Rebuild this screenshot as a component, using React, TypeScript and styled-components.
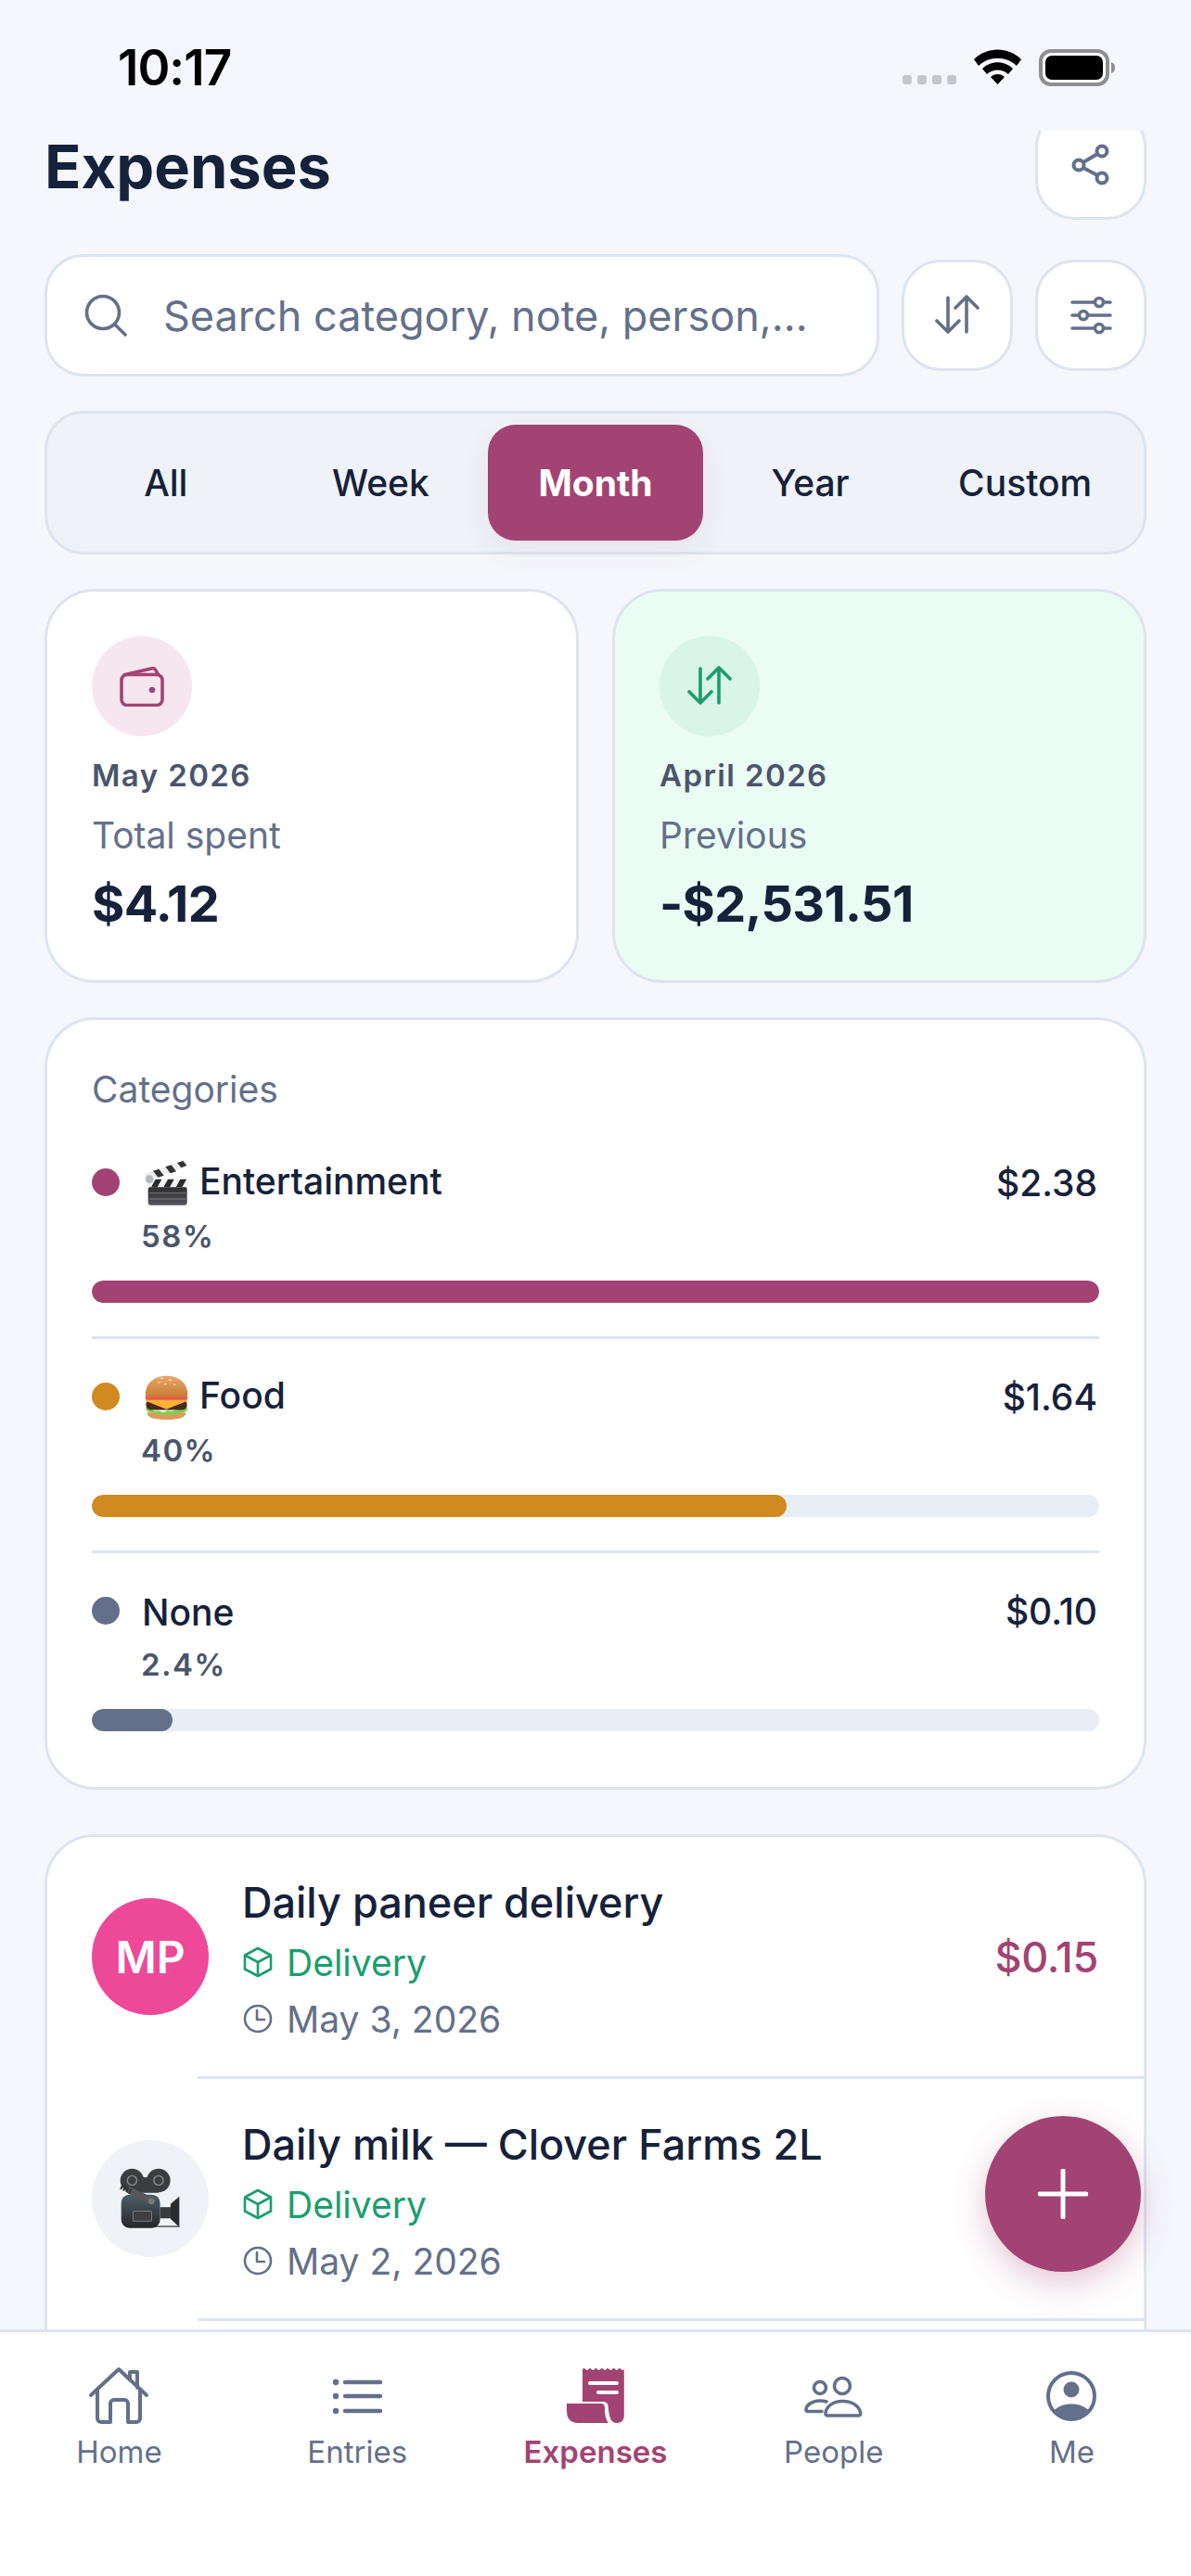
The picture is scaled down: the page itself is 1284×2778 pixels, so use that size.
import React from 'react';
import styled, { createGlobalStyle } from 'styled-components';

const ACCENT = '#a34373';
const INK = '#16213a';
const MUTED = '#64708a';
const LINE = '#dde4f0';
const GREEN = '#1a9e6f';

const GlobalStyle = createGlobalStyle`
  html, body {
    margin: 0;
    padding: 0;
    background: #f5f7fc;
  }
  * {
    box-sizing: border-box;
  }
`;

const Phone = styled.div`
  width: 1284px;
  height: 2778px;
  position: relative;
  display: flex;
  flex-direction: column;
  overflow: hidden;
  background: #f5f7fc;
  color: ${INK};
  font-family: Inter, 'Liberation Sans', sans-serif;
`;

const StatusBar = styled.div`
  height: 141px;
  flex: none;
  display: flex;
  align-items: flex-start;
  justify-content: space-between;
  padding: 45px 82px 0 127px;
`;

const Clock = styled.div`
  font-size: 53px;
  line-height: 56px;
  font-weight: 600;
  letter-spacing: -1px;
  color: #000;
`;

const StatusIcons = styled.div`
  display: flex;
  align-items: flex-start;
  padding-top: 8px;
`;

const Scroller = styled.div`
  flex: 1;
  min-height: 0;
  overflow: hidden;
`;

const Content = styled.div`
  margin-top: -24px;
  padding: 0 48px;
  display: flex;
  flex-direction: column;
`;

const TitleRow = styled.div`
  display: flex;
  align-items: center;
  justify-content: space-between;
  height: 120px;
`;

const Title = styled.h1`
  margin: 6px 0 0;
  font-size: 65px;
  line-height: 72px;
  font-weight: 700;
  color: ${INK};
`;

const IconButton = styled.button`
  width: 120px;
  height: 120px;
  flex: none;
  padding: 0;
  display: flex;
  align-items: center;
  justify-content: center;
  background: #fff;
  border: 3px solid ${LINE};
  border-radius: 42px;
`;

const SearchRow = styled.div`
  margin-top: 37px;
  display: flex;
  align-items: center;
  gap: 24px;
`;

const SearchBox = styled.div`
  flex: 1;
  height: 132px;
  display: flex;
  align-items: center;
  gap: 39px;
  padding: 0 40px;
  background: #fff;
  border: 3px solid ${LINE};
  border-radius: 42px;
`;

const Placeholder = styled.span`
  font-size: 45px;
  color: ${MUTED};
  white-space: nowrap;
`;

const Segments = styled.div`
  margin-top: 37px;
  height: 155px;
  display: flex;
  padding: 12px;
  background: #eff2f8;
  border: 3px solid ${LINE};
  border-radius: 42px;
`;

const Segment = styled.div<{ $active?: boolean }>`
  flex: 1;
  display: flex;
  align-items: center;
  justify-content: center;
  border-radius: 30px;
  font-size: 39px;
  font-weight: ${(p) => (p.$active ? 700 : 500)};
  color: ${(p) => (p.$active ? '#fff' : INK)};
  background: ${(p) => (p.$active ? ACCENT : 'transparent')};
  box-shadow: ${(p) => (p.$active ? '0 12px 30px rgba(163, 67, 115, 0.08)' : 'none')};
`;

const SummaryGrid = styled.div`
  margin-top: 37px;
  display: grid;
  grid-template-columns: 1fr 1fr;
  gap: 36px;
`;

const SummaryCard = styled.div<{ $tint?: string }>`
  height: 425px;
  padding: 48px;
  background: ${(p) => p.$tint || '#fff'};
  border: 3px solid ${LINE};
  border-radius: 54px;
`;

const RoundIcon = styled.div<{ $bg: string }>`
  width: 108px;
  height: 108px;
  border-radius: 50%;
  display: flex;
  align-items: center;
  justify-content: center;
  background: ${(p) => p.$bg};
`;

const Period = styled.div`
  margin-top: 18px;
  font-size: 33px;
  line-height: 48px;
  font-weight: 600;
  letter-spacing: 1.4px;
  color: #4a556c;
`;

const SummaryLabel = styled.div`
  margin-top: 14px;
  font-size: 39px;
  line-height: 54px;
  color: ${MUTED};
`;

const SummaryValue = styled.div`
  margin-top: 11px;
  font-size: 54px;
  line-height: 72px;
  font-weight: 700;
  letter-spacing: -0.7px;
  color: ${INK};
`;

const CategoriesCard = styled.div`
  margin-top: 37px;
  padding: 48px 48px 24px;
  background: #fff;
  border: 3px solid ${LINE};
  border-radius: 54px;
`;

const CardHeading = styled.div`
  font-size: 39px;
  line-height: 54px;
  margin-bottom: 11px;
  color: ${MUTED};
`;

const CategoryRow = styled.div`
  padding: 36px 0;
  & + & {
    border-top: 3px solid ${LINE};
  }
`;

const CategoryHead = styled.div`
  height: 52px;
  display: flex;
  align-items: center;
`;

const Dot = styled.span<{ $color: string }>`
  width: 30px;
  height: 30px;
  flex: none;
  border-radius: 50%;
  margin-right: 24px;
  background: ${(p) => p.$color};
`;

const EmojiSlot = styled.span`
  width: 52px;
  display: flex;
  justify-content: center;
  margin-right: 10px;
`;

const CategoryName = styled.span<{ $raised?: boolean }>`
  flex: 1;
  margin-top: ${(p) => (p.$raised ? '-4px' : '2px')};
  font-size: 39px;
  font-weight: 500;
  color: ${INK};
`;

const CategoryAmount = styled.span`
  margin-right: 2px;
  font-size: 39px;
  font-weight: 500;
  color: ${INK};
`;

const Percent = styled.div`
  margin: 11px 0 27px 53px;
  font-size: 33px;
  line-height: 42px;
  font-weight: 600;
  letter-spacing: 1.4px;
  color: #4a556c;
`;

const Track = styled.div`
  height: 24px;
  border-radius: 12px;
  overflow: hidden;
  background: #e8eef6;
`;

const Fill = styled.div<{ $color: string }>`
  height: 100%;
  border-radius: 12px;
  background: ${(p) => p.$color};
`;

const ListCard = styled.div`
  margin-top: 48px;
  padding-bottom: 60px;
  background: #fff;
  border: 3px solid ${LINE};
  border-radius: 54px;
`;

const EntryRow = styled.div`
  height: 258px;
  display: flex;
  align-items: center;
  padding: 0 49px 0 48px;
`;

const Avatar = styled.div<{ $bg: string }>`
  width: 126px;
  height: 126px;
  flex: none;
  border-radius: 50%;
  display: flex;
  align-items: center;
  justify-content: center;
  margin-right: 36px;
  background: ${(p) => p.$bg};
  color: #fff;
  font-size: 48px;
  font-weight: 600;
`;

const EntryText = styled.div`
  flex: 1;
  min-width: 0;
  margin-top: 6px;
`;

const EntryTitle = styled.div`
  font-size: 45px;
  line-height: 60px;
  font-weight: 500;
  color: ${INK};
`;

const MetaLine = styled.div<{ $color: string }>`
  height: 54px;
  margin-top: 7px;
  display: flex;
  align-items: center;
  gap: 15px;
  padding-left: 1px;
  font-size: 39px;
  color: ${(p) => p.$color};
`;

const EntryAmount = styled.div`
  font-size: 45px;
  font-weight: 500;
  letter-spacing: -0.3px;
  color: ${ACCENT};
`;

const EntryDivider = styled.div`
  height: 3px;
  margin-left: 162px;
  background: ${LINE};
`;

const Fab = styled.button`
  position: absolute;
  left: 1062px;
  top: 2282px;
  width: 168px;
  height: 168px;
  padding: 0;
  border: none;
  border-radius: 50%;
  display: flex;
  align-items: center;
  justify-content: center;
  background: ${ACCENT};
  box-shadow: 0 12px 36px rgba(163, 67, 115, 0.3);
`;

const BottomNav = styled.nav`
  height: 266px;
  flex: none;
  position: relative;
  display: grid;
  grid-template-columns: repeat(5, 1fr);
  padding-top: 35px;
  align-items: start;
  background: #fff;
  border-top: 3px solid ${LINE};
`;

const Tab = styled.div<{ $active?: boolean }>`
  display: flex;
  flex-direction: column;
  align-items: center;
  gap: 7px;
  font-size: 33px;
  line-height: 42px;
  font-weight: ${(p) => (p.$active ? 600 : 400)};
  color: ${(p) => (p.$active ? ACCENT : MUTED)};
`;

const SortIcon = ({ color = MUTED, size = 48 }: { color?: string; size?: number }) => (
  <svg width={size} height={size} viewBox="0 0 48 48" fill="none" stroke={color} strokeWidth="3.6" strokeLinecap="round" strokeLinejoin="round">
    <path d="M14 5v37M2 30l12 12 12-12" />
    <path d="M34 42V4M22 16L34 4l12 12" />
  </svg>
);

const ShareIcon = () => (
  <svg width="42" height="45" viewBox="0 0 42 45" fill="none" stroke={MUTED} strokeWidth="4">
    <circle cx="8" cy="23" r="5.5" />
    <circle cx="33" cy="8" r="5.5" />
    <circle cx="33" cy="37" r="5.5" />
    <path d="M13 20L28 11M13 26L28 34" />
  </svg>
);

const FilterIcon = () => (
  <svg width="45" height="42" viewBox="0 0 45 42" fill="none" stroke={MUTED} strokeWidth="3.6" strokeLinecap="round">
    <path d="M2 7h24M36 7h7M2 21h7M19 21h24M2 35h24M36 35h7" />
    <circle cx="31" cy="7" r="4.5" />
    <circle cx="14" cy="21" r="4.5" />
    <circle cx="31" cy="35" r="4.5" />
  </svg>
);

const SearchIcon = () => (
  <svg width="46" height="46" viewBox="0 0 46 46" fill="none" stroke={MUTED} strokeWidth="3.6" strokeLinecap="round">
    <circle cx="20" cy="20" r="17.5" />
    <path d="M33 33l11 11" />
  </svg>
);

const WalletIcon = () => (
  <svg width="48" height="44" viewBox="0 0 48 44" fill="none" stroke={ACCENT} strokeWidth="3.6" strokeLinejoin="round">
    <rect x="2" y="9.500" width="44" height="33" rx="6" />
    <path d="M4 10l30-7a4 4 0 0 1 5 2l2.500 4.500" />
    <circle cx="35" cy="26" r="3.200" fill={ACCENT} stroke="none" />
  </svg>
);

const BoxIcon = () => (
  <svg width="32" height="34" viewBox="0 0 32 34" fill="none" stroke={GREEN} strokeWidth="2.6" strokeLinejoin="round">
    <path d="M16 2l14 7.5v15L16 32 2 24.500v-15z" />
    <path d="M2 9.500L16 17l14-7.500M16 17v15" />
  </svg>
);

const ClockIcon = () => (
  <svg width="32" height="32" viewBox="0 0 32 32" fill="none" stroke={MUTED} strokeWidth="2.6" strokeLinecap="round" strokeLinejoin="round">
    <circle cx="16" cy="16" r="14" />
    <path d="M15 7v10h8" />
  </svg>
);

const Clapper = () => (
  <svg width="52" height="52" viewBox="36 24 156 156">
    <defs>
      <linearGradient id="clapBody" x1="0" y1="0" x2="0" y2="1">
        <stop offset="0" stopColor="#2c2c2e" />
        <stop offset="1" stopColor="#55555a" />
      </linearGradient>
    </defs>
    <rect x="56" y="116" width="126" height="60" rx="9" fill="url(#clapBody)" />
    <path d="M60 137h118M60 156h118" stroke="#9a9a9e" strokeWidth="2" />
    <path d="M54 92h132v26H54z" fill="#f2f2f2" />
    <path d="M80 92h20l-14 26H66zM120 92h20l-14 26h-20zM160 92h20l-14 26h-20z" fill="#2a2a2c" />
    <path d="M44 75L175 30l7 20L52 95z" fill="#ececec" />
    <path d="M72 65l19-6 16 21-19 6zM112 52l19-6 16 21-19 6zM150 39l19-6 12 15-18 7z" fill="#333335" />
    <circle cx="60" cy="92" r="13" fill="#b4b8bc" />
  </svg>
);

const Burger = () => (
  <svg width="49" height="49" viewBox="45 30 140 140">
    <defs>
      <linearGradient id="bun" x1="0" y1="0" x2="0" y2="1">
        <stop offset="0" stopColor="#e9a767" />
        <stop offset="1" stopColor="#c97b36" />
      </linearGradient>
    </defs>
    <path d="M55 148h120c0 16-24 22-60 22s-60-6-60-22z" fill="#dd9a5c" />
    <path d="M52 132c8 8 14 4 22 9s14-2 22 3 14 2 20-1 14 3 22-1 12-2 20-4 12-4 20-7l2 10c-8 8-40 14-64 14s-56-6-64-14z" fill="#7ed04a" />
    <rect x="52" y="108" width="126" height="32" rx="14" fill="#4a2a1e" />
    <path d="M50 104h130l-2 9-63 25-63-25z" fill="#f9b233" />
    <rect x="50" y="95" width="130" height="14" rx="7" fill="#e85a4f" />
    <path d="M50 93c0-42 35-58 65-58s65 16 65 58c0 4-4 7-8 7H58c-4 0-8-3-8-7z" fill="url(#bun)" />
    <path d="M98 42h6M124 48h6M90 55h5M138 62h4M110 60h4" stroke="#f6d7ae" strokeWidth="4" strokeLinecap="round" />
  </svg>
);

const MovieCamera = () => (
  <svg width="67" height="67" viewBox="120 100 200 200">
    <defs>
      <linearGradient id="camBody" x1="0" y1="0" x2="0" y2="1">
        <stop offset="0" stopColor="#4d5f6a" />
        <stop offset="1" stopColor="#262628" />
      </linearGradient>
    </defs>
    <circle cx="160" cy="140" r="38" fill="#3c3d40" />
    <circle cx="245" cy="140" r="38" fill="#3c3d40" />
    <rect x="160" y="130" width="85" height="50" fill="#3c3d40" />
    <circle cx="160" cy="140" r="15" fill="none" stroke="#8d8f93" strokeWidth="4" />
    <circle cx="245" cy="140" r="15" fill="none" stroke="#8d8f93" strokeWidth="4" />
    <path d="M165 288h147" stroke="#555" strokeWidth="5" />
    <rect x="125" y="186" width="125" height="107" rx="26" fill="url(#camBody)" />
    <rect x="163" y="239" width="60" height="32" rx="3" fill="#3f3f42" stroke="#7b7b7f" strokeWidth="3" />
    <rect x="250" y="226" width="36" height="36" fill="#3a3b3e" />
    <path d="M284 216l28-24v98l-28-26z" fill="#2b2b2d" />
    <path d="M152 172l72 34" stroke="#56585c" strokeWidth="22" strokeLinecap="round" />
    <circle cx="222" cy="207" r="10" fill="#77797d" />
    <path d="M124 160l36 18" stroke="#2f2f31" strokeWidth="16" strokeDasharray="6 4" />
  </svg>
);

const HomeIcon = () => (
  <svg width="66" height="66" viewBox="0 0 66 66" fill="none" stroke={MUTED} strokeWidth="4" strokeLinecap="round" strokeLinejoin="round">
    <path d="M3 33L33 5l30 28" />
    <path d="M10 27v31a4 4 0 0 0 4 4h10V42a4 4 0 0 1 4-4h11a4 4 0 0 1 4 4v20h9a4 4 0 0 0 4-4V27" />
    <path d="M45 16V8h8v17" />
  </svg>
);

const ListIcon = () => (
  <svg width="66" height="66" viewBox="0 0 66 66" fill={MUTED} stroke={MUTED} strokeLinecap="round">
    <circle cx="10" cy="19" r="3.200" stroke="none" />
    <circle cx="10" cy="34" r="3.200" stroke="none" />
    <circle cx="10" cy="50" r="3.200" stroke="none" />
    <path d="M20 19h38M20 34h38M20 50h38" strokeWidth="4.400" />
  </svg>
);

const ReceiptIcon = () => (
  <svg width="66" height="66" viewBox="0 0 66 66">
    <path
      d="M19 5q1.600-2 3.200 0t3.200 0 3.200 0 3.200 0 3.200 0 3.200 0 3.200 0 3.200 0 3.200 0 3.200 0 3.200 0 3.200 0 3.200 0 3.200 0V55c0 5-3 8-8 8-6 0-8-6-9-16 0-4-1-7-6-7H19z"
      fill={ACCENT}
    />
    <path d="M2 42h37c3 0 4 2 4 5 0 7 1 12 4 16H14C6 63 2 58 2 50z" fill={ACCENT} />
    <path d="M27 20h29M36 30h20" stroke="#fff" strokeWidth="4" strokeLinecap="round" />
  </svg>
);

const PeopleIcon = () => (
  <svg width="66" height="66" viewBox="0 0 66 66" fill="none" stroke={MUTED} strokeWidth="3.6" strokeLinecap="round" strokeLinejoin="round">
    <circle cx="18" cy="25" r="6.500" />
    <circle cx="42" cy="23" r="8.500" />
    <path d="M25 40c-2.500-.8-5-1-7-1-8 0-14 4-15 9-.3 1.500.5 2.500 2 2.500h15" />
    <path d="M42.500 39.500C32 39.500 25 45 24 52c-.3 2 .7 3 2.500 3H59c2 0 3-1 2.700-3-1.200-7-8.700-12.500-19.200-12.500z" />
  </svg>
);

const PersonIcon = () => (
  <svg width="66" height="66" viewBox="0 0 66 66">
    <circle cx="32" cy="34" r="25" fill="none" stroke={MUTED} strokeWidth="4" />
    <circle cx="32" cy="27" r="8.500" fill={MUTED} />
    <path d="M13 50c4-5 11-7.500 19-7.500S47 45 51 50c-5 6-11 9-19 9s-14-3-19-9z" fill={MUTED} />
  </svg>
);

const StatusGlyphs = () => (
  <StatusIcons>
    <svg width="229" height="44" viewBox="0 0 229 44">
      <g fill="#c4c6cc">
        <rect x="0" y="28" width="10" height="10" rx="3" />
        <rect x="16" y="28" width="10" height="10" rx="3" />
        <rect x="32" y="28" width="10" height="10" rx="3" />
        <rect x="48" y="28" width="10" height="10" rx="3" />
      </g>
      <g fill="#000">
        <path d="M77 11c14-14 37-14 51 0l-5 7c-11-11-30-11-41 0z" />
        <path d="M86 21c9-9 24-9 33 0l-5 6c-6-6-17-6-23 0z" />
        <path d="M95 30c4-4 11-4 15 0l-7.500 8z" />
      </g>
      <rect x="149" y="2" width="72" height="36" rx="11" fill="#fff" stroke="#8e8e93" strokeWidth="4" />
      <rect x="154" y="7" width="62" height="26" rx="7" fill="#000" />
      <path d="M225 14c3 1 4 3 4 6s-1 5-4 6z" fill="#8e8e93" />
    </svg>
  </StatusIcons>
);

const categories = [
  { name: 'Entertainment', amount: '$2.38', pct: '58%', color: ACCENT, width: 100, emoji: <Clapper /> },
  { name: 'Food', amount: '$1.64', pct: '40%', color: '#d08a20', width: 69, emoji: <Burger /> },
  { name: 'None', amount: '$0.10', pct: '2.4%', color: MUTED, width: 8, emoji: null },
];

const entries = [
  { title: 'Daily paneer delivery', date: 'May 3, 2026', amount: '$0.15', bg: '#ee4899', avatar: 'MP' as React.ReactNode },
  { title: 'Daily milk — Clover Farms 2L', date: 'May 2, 2026', amount: '', bg: '#eff2f7', avatar: <MovieCamera /> as React.ReactNode },
];

const tabs = [
  { label: 'Home', icon: <HomeIcon /> },
  { label: 'Entries', icon: <ListIcon /> },
  { label: 'Expenses', icon: <ReceiptIcon />, active: true },
  { label: 'People', icon: <PeopleIcon /> },
  { label: 'Me', icon: <PersonIcon /> },
];

export default function App() {
  return (
    <Phone>
      <GlobalStyle />
      <StatusBar>
        <Clock>10:17</Clock>
        <StatusGlyphs />
      </StatusBar>

      <Scroller>
        <Content>
          <TitleRow>
            <Title>Expenses</Title>
            <IconButton aria-label="Share">
              <ShareIcon />
            </IconButton>
          </TitleRow>

          <SearchRow>
            <SearchBox>
              <SearchIcon />
              <Placeholder>Search category, note, person,...</Placeholder>
            </SearchBox>
            <IconButton aria-label="Sort">
              <SortIcon />
            </IconButton>
            <IconButton aria-label="Filter">
              <FilterIcon />
            </IconButton>
          </SearchRow>

          <Segments>
            <Segment>All</Segment>
            <Segment>Week</Segment>
            <Segment $active>Month</Segment>
            <Segment>Year</Segment>
            <Segment>Custom</Segment>
          </Segments>

          <SummaryGrid>
            <SummaryCard>
              <RoundIcon $bg="#f6e6f0">
                <WalletIcon />
              </RoundIcon>
              <Period>May 2026</Period>
              <SummaryLabel>Total spent</SummaryLabel>
              <SummaryValue>$4.12</SummaryValue>
            </SummaryCard>
            <SummaryCard $tint="#ebfcf4">
              <RoundIcon $bg="#d9f4e8">
                <SortIcon color={GREEN} size={48} />
              </RoundIcon>
              <Period>April 2026</Period>
              <SummaryLabel>Previous</SummaryLabel>
              <SummaryValue>-$2,531.51</SummaryValue>
            </SummaryCard>
          </SummaryGrid>

          <CategoriesCard>
            <CardHeading>Categories</CardHeading>
            {categories.map((c) => (
              <CategoryRow key={c.name}>
                <CategoryHead>
                  <Dot $color={c.color} />
                  {c.emoji && <EmojiSlot>{c.emoji}</EmojiSlot>}
                  <CategoryName $raised={!!c.emoji}>{c.name}</CategoryName>
                  <CategoryAmount>{c.amount}</CategoryAmount>
                </CategoryHead>
                <Percent>{c.pct}</Percent>
                <Track>
                  <Fill $color={c.color} style={{ width: `${c.width}%` }} />
                </Track>
              </CategoryRow>
            ))}
          </CategoriesCard>

          <ListCard>
            {entries.map((e) => (
              <React.Fragment key={e.title}>
                <EntryRow>
                  <Avatar $bg={e.bg}>{e.avatar}</Avatar>
                  <EntryText>
                    <EntryTitle>{e.title}</EntryTitle>
                    <MetaLine $color={GREEN}>
                      <BoxIcon />
                      Delivery
                    </MetaLine>
                    <MetaLine $color={MUTED}>
                      <ClockIcon />
                      {e.date}
                    </MetaLine>
                  </EntryText>
                  <EntryAmount>{e.amount}</EntryAmount>
                </EntryRow>
                <EntryDivider />
              </React.Fragment>
            ))}
          </ListCard>
        </Content>
      </Scroller>

      <BottomNav>
        {tabs.map((t) => (
          <Tab key={t.label} $active={t.active}>
            {t.icon}
            {t.label}
          </Tab>
        ))}
      </BottomNav>

      <Fab aria-label="Add">
        <svg width="54" height="54" viewBox="0 0 54 54" stroke="#fff" strokeWidth="5" strokeLinecap="round">
          <path d="M27 2v50M2 27h50" />
        </svg>
      </Fab>
    </Phone>
  );
}
